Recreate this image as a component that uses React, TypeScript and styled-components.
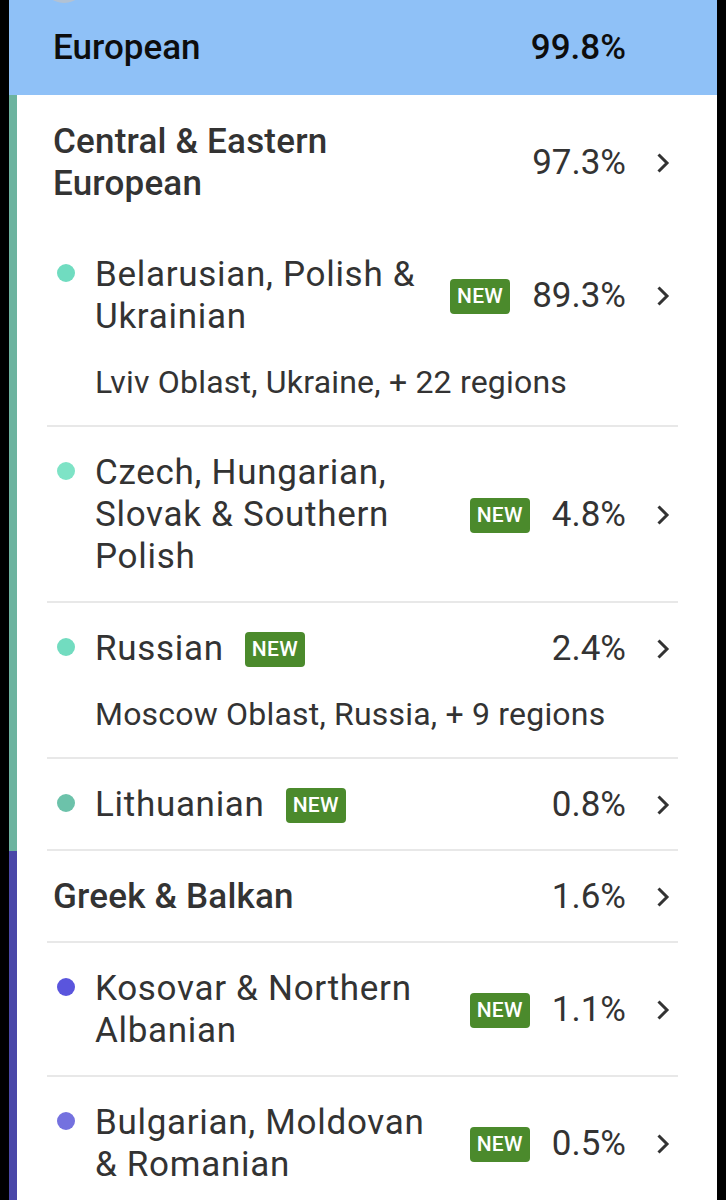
import styled, { createGlobalStyle } from 'styled-components';

interface Item {
  dot: string;
  label: string;
  pct: string;
  sub?: string;
}
interface Group {
  stripe: string;
  title: string;
  pct: string;
  divided: boolean;
  items: Item[];
}

const GROUPS: Group[] = [
  {
    stripe: '#6cb39f',
    title: 'Central & Eastern European',
    pct: '97.3%',
    divided: false,
    items: [
      { dot: '#70dcc0', label: 'Belarusian, Polish & Ukrainian', pct: '89.3%', sub: 'Lviv Oblast, Ukraine, + 22 regions' },
      { dot: '#7ee3c6', label: 'Czech, Hungarian, Slovak & Southern Polish', pct: '4.8%' },
      { dot: '#72dcc0', label: 'Russian', pct: '2.4%', sub: 'Moscow Oblast, Russia, + 9 regions' },
      { dot: '#6cc2aa', label: 'Lithuanian', pct: '0.8%' },
    ],
  },
  {
    stripe: '#4a47a8',
    title: 'Greek & Balkan',
    pct: '1.6%',
    divided: true,
    items: [
      { dot: '#5a55dd', label: 'Kosovar & Northern Albanian', pct: '1.1%' },
      { dot: '#7471df', label: 'Bulgarian, Moldovan & Romanian', pct: '0.5%' },
    ],
  },
];

const Chevron = () => (
  <ChevronBox>
    <svg width="14" height="22" viewBox="0 0 14 22">
      <polyline points="2.5,2.5 11,11 2.5,19.5" fill="none" stroke="#333" strokeWidth="3" strokeLinejoin="miter" />
    </svg>
  </ChevronBox>
);

export default function App() {
  return (
    <Page>
      <GlobalStyle />
      <Panel>
        <Header>
          <Avatar />
          <HeaderTitle>European</HeaderTitle>
          <HeaderPct>99.8%</HeaderPct>
        </Header>
        {GROUPS.map((g, gi) => (
          <GroupBox key={g.title} stripe={g.stripe} last={gi === GROUPS.length - 1}>
            <GroupRow divided={g.divided}>
              <GroupTitle>{g.title}</GroupTitle>
              <Pct>{g.pct}</Pct>
              <Chevron />
            </GroupRow>
            {g.items.map((it) => (
              <ItemRow key={it.label}>
                <ItemMain>
                  <Dot color={it.dot} />
                  <Label>{it.label}</Label>
                  <Badge>NEW</Badge>
                  <Pct>{it.pct}</Pct>
                  <Chevron />
                </ItemMain>
                {it.sub && <Sub>{it.sub}</Sub>}
              </ItemRow>
            ))}
          </GroupBox>
        ))}
      </Panel>
    </Page>
  );
}

const GlobalStyle = createGlobalStyle`
  body {
    margin: 0;
    background: #000;
    font-family: Roboto, "Noto Sans", sans-serif;
  }
`;

const Page = styled.div`
  width: 726px;
  min-height: 1200px;
  background: #000;
  overflow: hidden;
`;

const Panel = styled.div`
  margin: 0 9px;
  min-height: 1200px;
  background: #fff;
  display: flex;
  flex-direction: column;
`;

const Header = styled.div`
  position: relative;
  height: 95px;
  flex-shrink: 0;
  display: flex;
  align-items: center;
  padding: 0 91px 0 44px;
  background: #8fc1f7;
  color: #0d0d0d;
  font-size: 35px;
  font-weight: 500;
  overflow: hidden;
`;

const Avatar = styled.div`
  position: absolute;
  left: 33px;
  top: -41px;
  width: 44px;
  height: 44px;
  border-radius: 50%;
  background: #b2c2d4;
`;

const HeaderTitle = styled.span`
  flex: 1;
`;

const HeaderPct = styled.span``;

const GroupBox = styled.div<{ stripe: string; last: boolean }>`
  border-left: 8px solid ${({ stripe }) => stripe};
  flex: ${({ last }) => (last ? 1 : 'none')};
`;

const GroupRow = styled.div<{ divided: boolean }>`
  margin: 0 39px 0 30px;
  padding: ${({ divided }) => (divided ? '25px 0 23px 6px' : '26px 0 24px 6px')};
  border-bottom: ${({ divided }) => (divided ? '2px solid #e8e8e8' : 'none')};
  display: flex;
  align-items: center;
  color: #333;
`;

const GroupTitle = styled.div`
  max-width: 330px;
  font-size: 35px;
  line-height: 42px;
  font-weight: 500;
  letter-spacing: 0.2px;
`;

const ItemRow = styled.div`
  margin: 0 39px 0 30px;
  padding: 25px 0 23px 10px;
  border-bottom: 2px solid #e8e8e8;
  color: #333;
`;

const ItemMain = styled.div`
  display: flex;
  align-items: center;
`;

const Dot = styled.span<{ color: string }>`
  flex-shrink: 0;
  align-self: flex-start;
  width: 18px;
  height: 18px;
  margin: 10px 20px 0 0;
  border-radius: 50%;
  background: ${({ color }) => color};
`;

const Label = styled.div`
  flex: 0 1 auto;
  min-width: 0;
  font-size: 35px;
  line-height: 42px;
  letter-spacing: 0.7px;
`;

const Badge = styled.span`
  flex-shrink: 0;
  margin-left: 21px;
  height: 35px;
  padding: 0 7px;
  display: flex;
  align-items: center;
  border-radius: 4px;
  background: #4b8a2c;
  color: #fff;
  font-size: 21px;
  font-weight: 500;
  letter-spacing: 0.3px;
`;

const Pct = styled.span`
  flex-shrink: 0;
  margin-left: auto;
  padding-left: 22px;
  font-size: 35px;
  line-height: 42px;
  color: #333;
`;

const ChevronBox = styled.span`
  flex-shrink: 0;
  width: 52px;
  display: flex;
  justify-content: flex-end;
  padding-right: 8px;
  box-sizing: border-box;
`;

const Sub = styled.div`
  margin-top: 24px;
  padding-left: 38px;
  font-size: 32px;
  line-height: 40px;
  letter-spacing: 0.2px;
`;
